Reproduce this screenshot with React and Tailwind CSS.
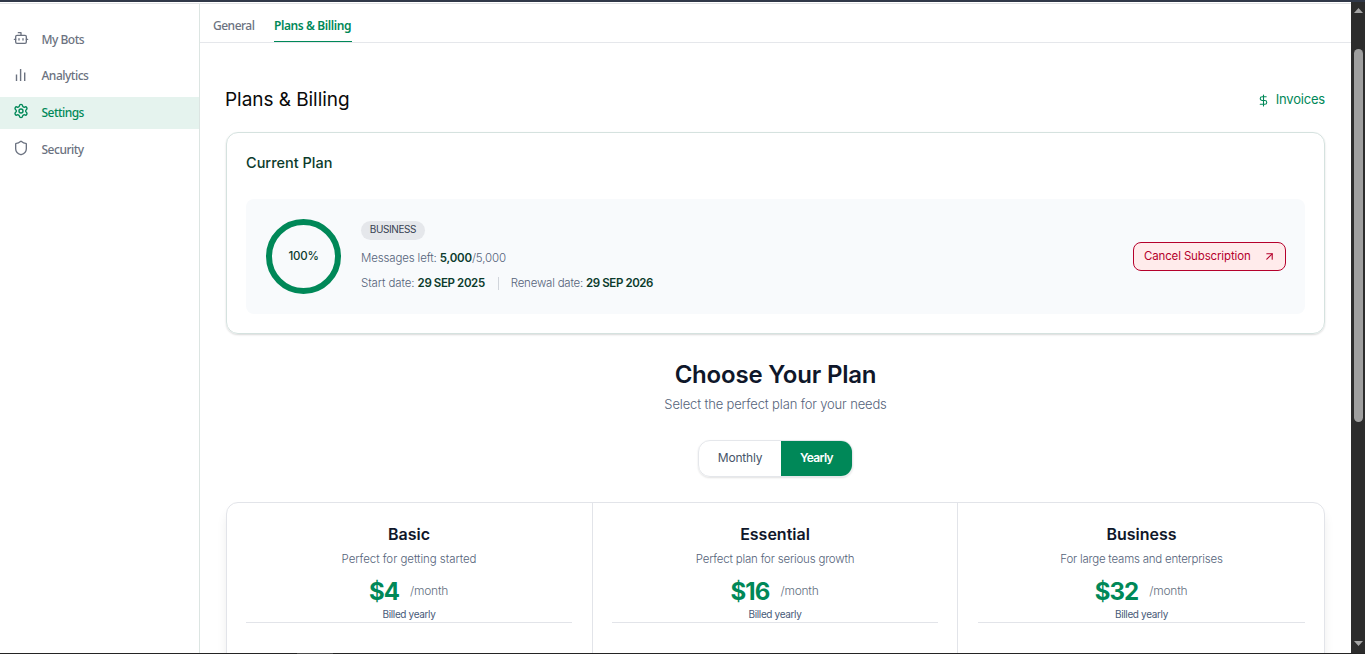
import React from "react";
import { Bot, Settings, Shield, DollarSign, ArrowUpRight } from "lucide-react";

function BarsIcon() {
  return (
    <svg className="mb-[-2px] ml-[1px]" width="14" height="14" viewBox="0 0 14 14" fill="none" stroke="currentColor" strokeWidth="1.4">
      <path d="M2.5 6.5V13M6.6 1V13M10.7 4.5V13" />
    </svg>
  );
}

const navItems = [
  { label: "My Bots", icon: <Bot size={16} strokeWidth={2} />, style: "text-[#6b7280] mb-1 tracking-[-0.5px]" },
  { label: "Analytics", icon: <BarsIcon />, style: "text-[#6b7280] mb-[5px] tracking-[-0.5px]" },
  { label: "Settings", icon: <Settings size={16} strokeWidth={2.1} />, style: "bg-[#e5f3ee] text-[#008858] mb-[5px] tracking-[-0.55px]" },
  { label: "Security", icon: <Shield size={16} strokeWidth={2} />, style: "text-[#6b7280] tracking-[-0.5px]" },
];

const plans = [
  { name: "Basic", text: "Perfect for getting started", price: "$4", width: "w-[366px] border-r pl-[19px]", inner: "w-[326px]", textStyle: "tracking-[-0.05px]" },
  { name: "Essential", text: "Perfect plan for serious growth", price: "$16", width: "w-[365px] border-r pl-[19px]", inner: "w-[326px]", textStyle: "tracking-[-0.2px]" },
  { name: "Business", text: "For large teams and enterprises", price: "$32", width: "w-[366px] pl-5", inner: "w-[327px]", textStyle: "tracking-[-0.22px]" },
];

function Sidebar() {
  return (
    <nav className="w-[200px] shrink-0 border-r border-[#dce5e2] pt-5 font-['Noto_Sans',sans-serif]">
      {navItems.map((item) => (
        <div key={item.label} className={`flex h-8 items-center pl-[13px] text-[12px] font-medium ${item.style}`}>
          <span className="mb-1 flex w-[28.5px]">{item.icon}</span>
          {item.label}
        </div>
      ))}
    </nav>
  );
}

function CurrentPlan() {
  return (
    <section className="mt-[18px] h-[202px] rounded-xl border border-[#d5e2df] px-[19px] shadow-[0_1px_2px_rgba(0,0,0,0.15)]">
      <h2 className="flex h-[66px] items-center pb-[6px] text-[14.5px] font-medium tracking-[0px] text-[#0b3b2c]">Current Plan</h2>
      <div className="flex h-[115px] items-center rounded-lg bg-[#f8fafc] pl-5 pr-[19px]">
        <div className="flex size-[75px] shrink-0 items-center justify-center rounded-full border-[6px] border-[#008858] text-[11.5px] font-medium tracking-[-0.2px] text-[#0b3b2c]">
          <span>100%</span>
        </div>
        <div className="ml-5 flex h-[71px] grow flex-col text-[11.5px] font-light text-[#55637a]">
          <span className="flex h-[19px] w-[64px] items-center justify-center rounded-full bg-[#e5e7eb] pb-px text-[10px] font-normal tracking-[-0.4px] text-[#374151]">BUSINESS</span>
          <p className="mt-[9px] h-[18px] leading-[18px] tracking-[-0.15px]">
            Messages left: <b className="font-semibold text-[#0b3b2c]">5,000</b>/5,000
          </p>
          <div className="mt-[8px] flex h-[18px] items-center">
            <p className="tracking-[-0.1px]">Start date: <b className="font-semibold tracking-[-0.38px] text-[#0b3b2c]">29 SEP 2025</b></p>
            <span className="ml-[13px] mr-3 h-[13px] w-px bg-[#d1d5db]" />
            <p className="tracking-[-0.22px]">Renewal date: <b className="font-semibold tracking-[-0.4px] text-[#0b3b2c]">29 SEP 2026</b></p>
          </div>
        </div>
        <button className="flex h-[29px] w-[153px] items-center justify-between rounded-lg border border-[#b5002b] bg-[#ffebeb] pl-[10px] pr-[9px] text-[11.5px] text-[#b5002b]">
          <span className="tracking-[-0.15px]">Cancel Subscription</span>
          <ArrowUpRight size={13} strokeWidth={2} />
        </button>
      </div>
    </section>
  );
}

function PlanCard({ plan }) {
  return (
    <div className={`${plan.width} shrink-0 border-[#e2e4e9]`}>
      <div className={`${plan.inner} flex h-[120px] flex-col items-center border-b border-[#e2e4e9] pt-[19px]`}>
        <h3 className="h-6 text-[16px] font-semibold leading-6 text-[#0f172a]">{plan.name}</h3>
        <p className={`mt-1 h-[18px] text-[11.5px] font-light leading-[19px] text-[#55637a] ${plan.textStyle}`}>{plan.text}</p>
        <div className="flex h-[42px] items-center">
          <span className="mt-[5px] text-[24px] font-bold tracking-[-0.9px] text-[#008858]">{plan.price}</span>
          <span className="ml-[11px] mr-px mt-1 text-[12px] font-light tracking-[-0.25px] text-[#64717f]">/month</span>
        </div>
        <span className="-mt-[3px] text-[10px] leading-[15px] tracking-[-0.35px] text-[#475a78]">Billed yearly</span>
      </div>
    </div>
  );
}

function Scrollbar() {
  return (
    <div className="flex w-[14px] shrink-0 flex-col items-center bg-[#2c2c2c]">
      <svg className="mt-[6px] shrink-0" width="9" height="5" viewBox="0 0 9 5" fill="#a5a5a5"><path d="M4.5 0L9 5H0z" /></svg>
      <div className="mt-9 h-[373px] w-[9px] rounded-full bg-[#9f9f9f]" />
      <svg className="mb-[7px] mt-auto shrink-0" width="9" height="5" viewBox="0 0 9 5" fill="#a5a5a5"><path d="M0 0H9L4.5 5z" /></svg>
    </div>
  );
}

export default function App() {
  return (
    <div className="flex h-[654px] w-[1365px] flex-col overflow-hidden bg-white font-['Inter',sans-serif]">
      <div className="h-[2px] shrink-0 bg-[#303848]" />
      <div className="flex h-[651px] shrink-0">
        <div className="flex w-[1351px] flex-col overflow-hidden">
          <div className="h-[2px] shrink-0 border-b border-[#e2e4e6]" />
          <div className="flex grow">
            <Sidebar />
            <main className="w-[1151px]">
              <div className="flex h-[39px] gap-[19px] border-b border-[#e5e7eb] pl-[13px] font-['Noto_Sans',sans-serif] text-[12px] font-medium text-[#6b7280]">
                <span className="flex h-[38px] w-[42px] items-center whitespace-nowrap pt-[6px] tracking-[-0.5px]">General</span>
                <span className="flex h-[38px] w-[78px] items-center whitespace-nowrap border-b border-[#008858] pt-[7px] font-semibold tracking-[-0.4px] text-[#008858]">Plans &amp; Billing</span>
              </div>
              <div className="flex flex-col pl-[26px] pr-[26px] pt-[42px]">
                <div className="flex h-[29px] items-center justify-between">
                  <h1 className="-ml-px pt-px text-[19px] tracking-[-0.05px] text-[#0a0a0a]">Plans &amp; Billing</h1>
                  <a className="flex items-center pt-px text-[13px] tracking-[-0.2px] text-[#008858]">
                    <DollarSign size={13} strokeWidth={2} className="mr-[6px]" />
                    Invoices
                  </a>
                </div>
                <CurrentPlan />
                <div className="flex flex-col items-center">
                  <h2 className="mt-[23px] h-9 text-[24px] font-semibold leading-9 tracking-[-0.2px] text-[#0f172a]">Choose Your Plan</h2>
                  <p className="mt-px h-5 text-[13px] font-light leading-5 tracking-[-0.15px] text-[#55637a]">Select the perfect plan for your needs</p>
                  <div className="mt-[26px] flex h-[37px] w-[155px] overflow-hidden rounded-xl border border-[#e5e7eb] text-[12px] shadow-[0_1px_2px_rgba(0,0,0,0.12)]">
                    <span className="flex w-[82px] items-center justify-center pb-px tracking-[-0.2px] text-[#475569]">Monthly</span>
                    <span className="flex grow items-center justify-center bg-[#008858] pb-px font-semibold tracking-[-0.6px] text-white">Yearly</span>
                  </div>
                </div>
                <div className="mt-[25px] flex h-[190px] rounded-xl border border-[#e2e4e9] shadow-[0_8px_12px_-2px_rgba(0,0,0,0.1)]">
                  {plans.map((plan) => <PlanCard key={plan.name} plan={plan} />)}
                </div>
              </div>
            </main>
          </div>
        </div>
        <Scrollbar />
      </div>
      <div className="flex h-px shrink-0 bg-[#242424]">
        <div className="ml-[297px] w-9 bg-[#4b4b4b]" />
      </div>
    </div>
  );
}
